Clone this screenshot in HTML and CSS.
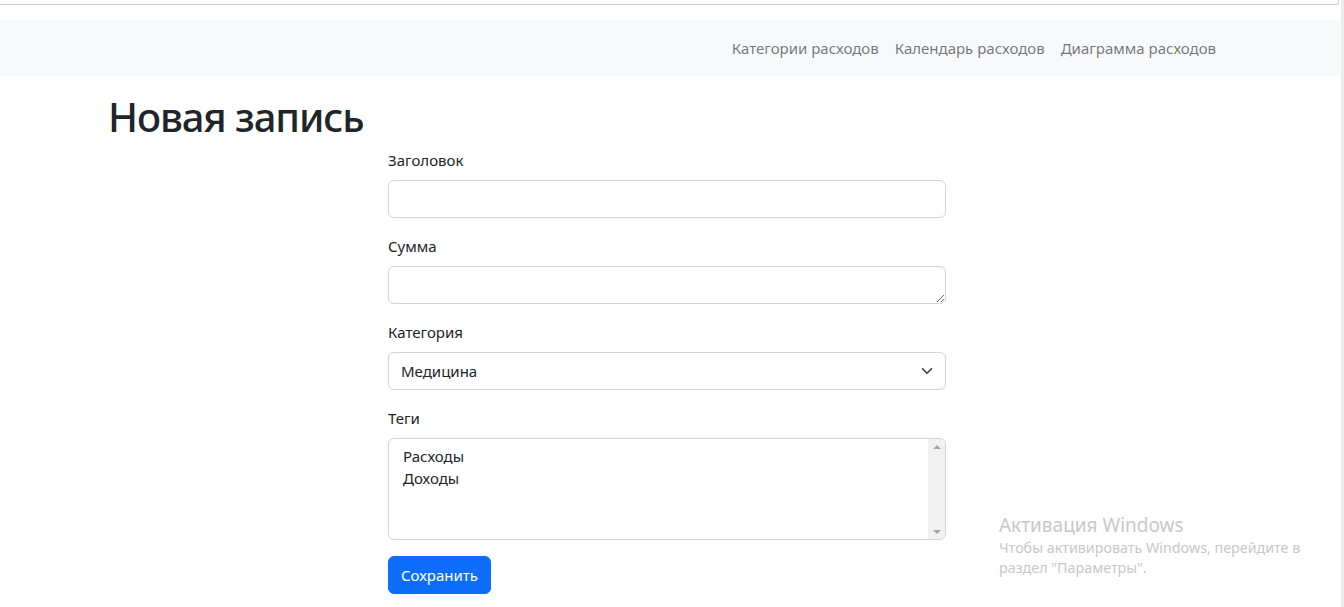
FILE: index.html
```html
<!DOCTYPE html>
<html lang="ru">
<head>
<meta charset="utf-8">
<title>Новая запись</title>
<link rel="stylesheet" href="styles.css">
</head>
<body>
<div class="frame">
  <div class="topline"></div>
  <nav class="navbar">
    <ul class="nav">
      <li><a class="nav-link" href="#">Категории расходов</a></li>
      <li><a class="nav-link" href="#">Календарь расходов</a></li>
      <li><a class="nav-link" href="#">Диаграмма расходов</a></li>
    </ul>
  </nav>
  <main class="container">
    <h1 class="title">Новая запись</h1>
    <form class="form">
      <div class="field">
        <label class="label">Заголовок</label>
        <input class="control" type="text">
      </div>
      <div class="field">
        <label class="label">Сумма</label>
        <textarea class="control area" rows="1"></textarea>
      </div>
      <div class="field">
        <label class="label">Категория</label>
        <div class="control select">
          <span>Медицина</span>
          <svg class="chev" width="16" height="16" viewBox="0 0 16 16"><path d="M2 5l6 6 6-6" fill="none" stroke="#343a40" stroke-width="2" stroke-linecap="round" stroke-linejoin="round"/></svg>
        </div>
      </div>
      <div class="field">
        <label class="label">Теги</label>
        <div class="control multi">
          <div class="options">
            <div class="opt">Расходы</div>
            <div class="opt">Доходы</div>
          </div>
          <div class="scroll">
            <svg width="8" height="6" viewBox="0 0 8 6"><path d="M0 5h8L4 1z" fill="#a3a3a3"/></svg>
            <svg width="8" height="6" viewBox="0 0 8 6"><path d="M0 1h8L4 5z" fill="#a3a3a3"/></svg>
          </div>
        </div>
      </div>
      <button class="btn" type="button">Сохранить</button>
    </form>
  </main>
  <div class="watermark">
    <div class="wm-title">Активация Windows</div>
    <div class="wm-text">Чтобы активировать Windows, перейдите в<br>раздел "Параметры".</div>
  </div>
</div>
</body>
</html>
```

FILE: styles.css
```css
* { box-sizing: border-box; }
html, body { margin: 0; padding: 0; }
body {
  font-family: "Noto Sans", "Open Sans", sans-serif;
  font-size: 16px;
  color: #212529;
  background: #fff;
  overflow: hidden;
}
.frame {
  position: relative;
  width: 1344px;
  height: 607px;
  border-right: 3px solid #ececec;
}
.topline {
  height: 20px;
  position: relative;
}
.topline::before {
  content: "";
  position: absolute;
  left: 0;
  right: 2px;
  top: 0;
  height: 4px;
  border-bottom: 1px solid #cfcfcf;
  border-right: 1px solid #cfcfcf;
  border-bottom-right-radius: 3px;
}
.navbar {
  height: 56px;
  background: #f8f9fa;
  display: flex;
  justify-content: flex-end;
  align-items: center;
  padding-right: 125px;
}
.nav {
  list-style: none;
  margin: 0;
  padding: 0;
  display: flex;
  gap: 16px;
}
.nav-link {
  color: rgba(0,0,0,.55);
  text-decoration: none;
  font-size: 15px;
  line-height: 24px;
  display: block;
}
.container {
  padding-left: 108px;
}
.title {
  margin: 17px 0 0;
  font-size: 40px;
  font-weight: 500;
  line-height: 48px;
  letter-spacing: -1.1px;
}
.form {
  margin-left: 280px;
  width: 558px;
  margin-top: 7px;
}
.field { margin-bottom: 16px; }
.label {
  display: block;
  font-size: 15px;
  line-height: 24px;
  margin-bottom: 8px;
}
.control {
  display: block;
  width: 100%;
  height: 38px;
  border: 1px solid #ced4da;
  border-radius: 6px;
  background: #fff;
  font-family: inherit;
  font-size: 15px;
  color: #212529;
  padding: 6px 12px;
  margin: 0;
}
.area { resize: vertical; }
.select {
  display: flex;
  align-items: center;
  justify-content: space-between;
  padding-right: 12px;
}
.chev { width: 12px; height: 12px; }
.multi {
  height: 102px;
  padding: 0;
  display: flex;
  overflow: hidden;
}
.options {
  flex: 1;
  padding: 6px 14px;
}
.opt {
  line-height: 22px;
  font-size: 15px;
}
.scroll {
  width: 17px;
  background: #f1f1f1;
  display: flex;
  flex-direction: column;
  justify-content: space-between;
  align-items: center;
  padding: 5px 0 4px;
}
.btn {
  display: block;
  background: #0d6efd;
  color: #fff;
  border: 1px solid #0d6efd;
  border-radius: 6px;
  font-family: inherit;
  font-size: 15px;
  line-height: 24px;
  padding: 6px 11px;
  width: 103px;
  height: 38px;
  margin-top: 0;
}
.watermark {
  position: absolute;
  left: 999px;
  top: 512px;
  color: #c8c8c8;
  font-family: "Noto Sans", sans-serif;
}
.wm-title {
  font-size: 19px;
  line-height: 26px;
}
.wm-text {
  font-size: 14.3px;
  line-height: 20px;
}
```
